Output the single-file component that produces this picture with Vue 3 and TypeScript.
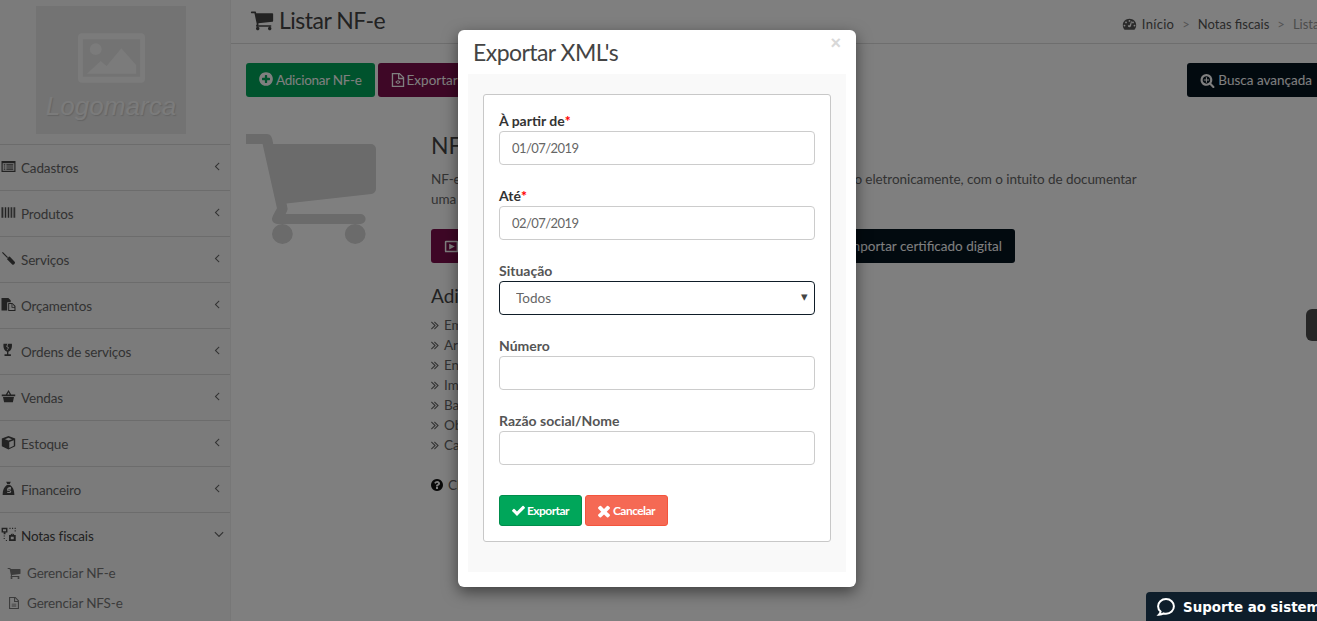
<template>
  <div class="page">
    <aside class="sidebar">
      <div class="logo">
        <svg class="logo-pic" viewBox="0 0 68 50">
          <path fill-rule="evenodd" d="M4 0h60a4 4 0 0 1 4 4v42a4 4 0 0 1-4 4H4a4 4 0 0 1-4-4V4a4 4 0 0 1 4-4zm1 6v38h58V6z" />
          <circle cx="18" cy="16" r="6" />
          <path d="M9 41l14-13 6 5 15-18 15 17v9z" />
        </svg>
        <span>Logomarca</span>
      </div>
      <ul class="menu">
        <li v-for="item in menu" :key="item.label" class="menu-item">
          <svg class="menu-icon" viewBox="0 0 1792 1792"><path fill-rule="evenodd" :d="icons[item.icon]" /></svg>
          <span class="menu-label" :class="{ open: item.open }">{{ item.label }}</span>
          <svg class="menu-arrow" :class="{ down: item.open }" viewBox="0 0 1792 1792">
            <path :d="item.open ? icons.angleDown : icons.angleLeft" />
          </svg>
        </li>
      </ul>
      <ul class="submenu">
        <li v-for="sub in submenu" :key="sub.label">
          <svg viewBox="0 0 1792 1792"><path fill-rule="evenodd" :d="icons[sub.icon]" /></svg>
          {{ sub.label }}
        </li>
      </ul>
    </aside>

    <main class="main">
      <header class="top">
        <h1><svg viewBox="0 0 1792 1792"><path :d="icons.cart" /></svg>Listar NF-e</h1>
        <nav class="crumbs">
          <svg viewBox="0 0 1792 1792"><path fill-rule="evenodd" :d="icons.gauge" /></svg>
          <a>Início</a><i>&gt;</i><a>Notas fiscais</a><i>&gt;</i><a class="muted">Listar NF-e</a>
        </nav>
      </header>

      <div class="toolbar">
        <button class="btn green"><svg class="ic-plus" viewBox="0 0 1792 1792"><path :d="icons.plus" /></svg>Adicionar NF-e</button>
        <button class="btn purple"><svg class="ic-file" viewBox="0 0 1792 1792"><path fill-rule="evenodd" :d="icons.fileCode" /></svg>Exportar XML's</button>
        <button class="btn dark push"><svg viewBox="0 0 1792 1792"><path :d="icons.search" /></svg>Busca avançada</button>
      </div>

      <section class="empty">
        <svg class="big-cart" viewBox="128 256 1600 1408" preserveAspectRatio="none"><path :d="icons.cart" /></svg>
        <div class="info">
          <h2>NF-e</h2>
          <p>NF-e é um documento de existência apenas digital, emitido e armazenado eletronicamente, com o intuito de documentar uma operação de circulação de mercadorias.</p>
          <div class="info-actions">
            <button class="btn purple"><svg viewBox="0 0 1792 1792"><path fill-rule="evenodd" :d="icons.play" /></svg>Assistir ao vídeo tutorial</button>
            <button class="btn dark"><svg viewBox="0 0 1792 1792"><path fill-rule="evenodd" :d="icons.fileCode" /></svg>Importar certificado digital</button>
          </div>
          <h3>Adicione suas notas</h3>
          <ul class="steps">
            <li v-for="step in steps" :key="step">
              <svg viewBox="0 0 1792 1792"><path :d="icons.double" /></svg>{{ step }}
            </li>
          </ul>
          <p class="help"><svg viewBox="0 0 1792 1792"><path :d="icons.question" /></svg>Clique aqui para saber mais</p>
        </div>
      </section>
    </main>

    <div class="side-tab"></div>

    <div class="backdrop"></div>

    <div class="modal">
      <span class="close">×</span>
      <h4>Exportar XML's</h4>
      <div class="modal-body">
        <form class="card" @submit.prevent>
          <div v-for="f in fields" :key="f.label" class="field">
            <label :class="{ strong: f.required }">{{ f.label }}<b v-if="f.required">*</b></label>
            <div v-if="f.select" class="select-wrap">
              <select><option>Todos</option></select>
              <span class="caret">▾</span>
            </div>
            <input v-else type="text" :value="f.value" />
          </div>
          <div class="actions">
            <button class="btn small green-on"><svg viewBox="0 0 1792 1792"><path :d="icons.check" /></svg>Exportar</button>
            <button class="btn small red-on"><svg class="ic-times" viewBox="0 0 1792 1792"><path :d="icons.times" /></svg>Cancelar</button>
          </div>
        </form>
      </div>
    </div>

    <div class="chat">
      <svg viewBox="0 0 24 24"><path d="M12 2.500c-5.500 0-9.500 3.800-9.500 8.700 0 2.600 1.100 4.700 3 6.300-.2 1.400-.9 2.600-2 3.700 2.400 0 4.300-.6 5.700-1.500 1 .2 1.900.3 2.800.3 5.500 0 9.500-3.900 9.500-8.800S17.500 2.500 12 2.500z" /></svg>
      <span>Suporte ao sistema</span>
    </div>
  </div>
</template>

<script setup lang="ts">
const icons: Record<string, string> = {
  cart: 'M704 1536q0 52-38 90t-90 38-90-38-38-90 38-90 90-38 90 38 38 90zm896 0q0 52-38 90t-90 38-90-38-38-90 38-90 90-38 90 38 38 90zm128-1088v512q0 24-16.500 42.500t-40.500 21.500l-1044 122q13 60 13 70 0 16-24 64h920q26 0 45 19t19 45-19 45-45 19h-1024q-26 0-45-19t-19-45q0-11 8-31.500t16-36 21.500-40 15.500-29.500l-177-823h-204q-26 0-45-19t-19-45 19-45 45-19h256q16 0 28.500 6.500t19.500 15.500 13 24.500 8 26 5.500 29.500 4.500 26h1201q26 0 45 19t19 45z',
  check: 'M1671 566q0 40-28 68l-724 724-136 136q-28 28-68 28t-68-28l-136-136-362-362q-28-28-28-68t28-68l136-136q28-28 68-28t68 28l294 295 656-657q28-28 68-28t68 28l136 136q28 28 28 68z',
  times: 'M1490 1322q0 40-28 68l-136 136q-28 28-68 28t-68-28l-294-294-294 294q-28 28-68 28t-68-28l-136-136q-28-28-28-68t28-68l294-294-294-294q-28-28-28-68t28-68l136-136q28-28 68-28t68 28l294 294 294-294q28-28 68-28t68 28l136 136q28 28 28 68t-28 68l-294 294 294 294q28 28 28 68z',
  plus: 'M1344 960v-128q0-26-19-45t-45-19h-256v-256q0-26-19-45t-45-19h-128q-26 0-45 19t-19 45v256h-256q-26 0-45 19t-19 45v128q0 26 19 45t45 19h256v256q0 26 19 45t45 19h128q26 0 45-19t19-45v-256h256q26 0 45-19t19-45zm320-64q0 209-103 385.500t-279.500 279.500-385.500 103-385.500-103-279.500-279.500-103-385.500 103-385.500 279.500-279.500 385.500-103 385.500 103 279.500 279.500 103 385.500z',
  question: 'M1024 1376v-192q0-14-9-23t-23-9h-192q-14 0-23 9t-9 23v192q0 14 9 23t23 9h192q14 0 23-9t9-23zm256-672q0-88-55.500-163t-138.500-116-170-41q-243 0-371 213-15 24 8 42l132 100q7 6 19 6 16 0 25-12 53-68 86-92 34-24 86-24 48 0 85.500 26t37.500 59q0 38-20 61t-68 45q-63 28-115.500 86.500t-52.500 125.500v36q0 14 9 23t23 9h192q14 0 23-9t9-23q0-19 21.500-49.500t54.500-49.500q32-18 49-28.500t46-35 44.500-48 28-60.500 12.500-81zm384 192q0 209-103 385.500t-279.500 279.500-385.500 103-385.500-103-279.500-279.500-103-385.500 103-385.500 279.500-279.500 385.500-103 385.500 103 279.500 279.500 103 385.500z',
  angleLeft: 'M1203 544q0 13-10 23l-393 393 393 393q10 10 10 23t-10 23l-50 50q-10 10-23 10t-23-10l-466-466q-10-10-10-23t10-23l466-466q10-10 23-10t23 10l50 50q10 10 10 23z',
  angleDown: 'M1395 736q0 13-10 23l-466 466q-10 10-23 10t-23-10l-466-466q-10-10-10-23t10-23l50-50q10-10 23-10t23 10l393 393 393-393q10-10 23-10t23 10l50 50q10 10 10 23z',
  double: 'M979 960q0 13-10 23l-466 466q-10 10-23 10t-23-10l-50-50q-10-10-10-23t10-23l393-393-393-393q-10-10-10-23t10-23l50-50q10-10 23-10t23 10l466 466q10 10 10 23zm384 0q0 13-10 23l-466 466q-10 10-23 10t-23-10l-50-50q-10-10-10-23t10-23l393-393-393-393q-10-10-10-23t10-23l50-50q10-10 23-10t23 10l466 466q10 10 10 23z',
  search: 'M1088 800v64q0 13-9.500 22.500t-22.500 9.500h-224v224q0 13-9.500 22.500t-22.500 9.500h-64q-13 0-22.500-9.500t-9.500-22.500v-224h-224q-13 0-22.500-9.500t-9.500-22.500v-64q0-13 9.500-22.500t22.500-9.500h224v-224q0-13 9.500-22.500t22.500-9.500h64q13 0 22.500 9.500t9.500 22.500v224h224q13 0 22.500 9.500t9.500 22.500zm128 32q0-185-131.500-316.500t-316.500-131.500-316.500 131.500-131.500 316.500 131.500 316.500 316.500 131.500 316.500-131.500 131.500-316.500zm512 832q0 53-37.500 90.500t-90.500 37.500q-54 0-90-38l-343-342q-179 124-399 124-143 0-273.500-55.500t-225-150-150-225-55.500-273.500 55.500-273.500 150-225 225-150 273.500-55.500 273.500 55.500 225 150 150 225 55.500 273.500q0 220-124 399l343 343q37 37 37 90z',
  // desenhados à mão, mesma grade de 1792
  listAlt: 'M60 240h1672v1300H60zM200 520v880h1392V520zM320 640h200v130H320zm320 0h830v130H640zM320 890h200v130H320zm320 0h830v130H640zM320 1140h200v130H320zm320 0h830v130H640z',
  barcode: 'M60 260h170v1270H60zm260 0h60v1270h-60zm150 0h130v1270H470zm220 0h60v1270h-60zm150 0h130v1270H840zm220 0h60v1270h-60zm150 0h130v1270h-130zm220 0h60v1270h-60zm140 0h130v1270h-130z',
  tool: 'M120 220L220 120 900 800 800 900zM800 760L1040 660 1660 1300Q1700 1420 1600 1560 1480 1680 1340 1600L720 1000z',
  files: 'M60 120h820l280 280v220H740v1000H60zM860 720h500l370 370v590H860zm500 100v360h270zM980 840v720h630v-280h-350V840z',
  trophy: 'M300 100h480l-160 330 220 160-160 260 60 30 210-310-200-170 120-300h430c60 500-120 850-420 950v290h300v200H420v-200h300v-290C420 950 240 600 300 100z',
  basket: 'M900 120l320 540h480v200H90V660h480zm0 260L760 660h280zM240 960h1310l-130 620H370z',
  cube: 'M896 120l800 300v920l-800 380-800-380V420zm0 220L470 500l426 160 426-160zM990 830v710l540-270V630z',
  bag: 'M620 100h550l-130 300H750zM700 480h390c330 230 500 620 500 1070v130H200v-130c0-450 170-840 500-1070zm20 620c0 130 360 70 360 160s-240 70-350 20v130c170 60 490 60 490-150 0-170-370-90-370-180 0-80 220-60 340-20V740c-170-40-470-30-470 360z',
  nodes: 'M70 100h700v560H540v210H320V660H70zm170 160v240h360V260zM1010 100h130v130h-130zm310 0h130v130h-130zm310 0h130v130h-130zm0 300h130v130h-130zM320 1010h130v130H320zm0 300h130v130H320zm260 240h130v130H580zm380-580h190c0-230 420-230 420 0h190v710H960zm340 0h110c0-80-110-80-110 0zm-130 180v320h350v-320z',
  fileText: 'M260 120h830l440 440v1110H260zM1040 250v380h360zM400 260v1270h990V770H900V260zm200 730h590v110H600zm0 240h590v110H600z',
  fileCode: 'M200 100h890l500 500v1090H200zM1040 240v410h410zM350 250v1290h1090V800H900V250zm230 880l260-220 80 90-160 130 160 130-80 90zm630 0l-260 220-80-90 160-130-160-130 80-90z',
  play: 'M240 200h1310a140 140 0 0 1 140 140v1110a140 140 0 0 1-140 140H240a140 140 0 0 1-140-140V340a140 140 0 0 1 140-140zm40 180v1030h1230V380zM620 560l680 340-680 340z',
  gauge: 'M896 220c440 0 800 330 800 760 0 210-80 390-210 540H306C176 1370 96 1190 96 980c0-430 360-760 800-760zM896 360a110 110 0 1 0 0 220 110 110 0 0 0 0-220zM480 540a110 110 0 1 0 0 220 110 110 0 0 0 0-220zm832 0a110 110 0 1 0 0 220 110 110 0 0 0 0-220zM300 920a110 110 0 1 0 0 220 110 110 0 0 0 0-220zm1190 0a110 110 0 1 0 0 220 110 110 0 0 0 0-220zM700 1020a190 190 0 1 0 380 30l110-500-90-30-180 480c-110-10-210 0-220 20z',
}

interface MenuItem {
  label: string
  icon: string
  open?: boolean
}

const menu: MenuItem[] = [
  { label: 'Cadastros', icon: 'listAlt' },
  { label: 'Produtos', icon: 'barcode' },
  { label: 'Serviços', icon: 'tool' },
  { label: 'Orçamentos', icon: 'files' },
  { label: 'Ordens de serviços', icon: 'trophy' },
  { label: 'Vendas', icon: 'basket' },
  { label: 'Estoque', icon: 'cube' },
  { label: 'Financeiro', icon: 'bag' },
  { label: 'Notas fiscais', icon: 'nodes', open: true },
]

const submenu = [
  { label: 'Gerenciar NF-e', icon: 'cart' },
  { label: 'Gerenciar NFS-e', icon: 'fileText' },
]

const steps = [
  'Emita notas fiscais',
  'Armazene os arquivos XML',
  'Envie por e-mail ao cliente',
  'Imprima o DANFE',
  'Baixe os documentos',
  'Obtenha relatórios',
  'Cancele notas emitidas',
]

const fields = [
  { label: 'À partir de', value: '01/07/2019', required: true },
  { label: 'Até', value: '02/07/2019', required: true },
  { label: 'Situação', select: true },
  { label: 'Número', value: '' },
  { label: 'Razão social/Nome', value: '' },
]
</script>

<style>
html,
body {
  margin: 0;
  overflow: hidden;
}
</style>

<style scoped>
.page {
  position: relative;
  display: flex;
  width: 1317px;
  height: 621px;
  overflow: hidden;
  background: #fff;
  color: #666;
  font-family: Lato, "Open Sans", sans-serif;
  font-size: 14px;
}

ul {
  list-style: none;
  margin: 0;
  padding: 0;
}

svg {
  fill: currentColor;
  flex: none;
}

/* sidebar */
.sidebar {
  width: 230px;
  flex: none;
  background: #f7f7f7;
  border-right: 1px solid #eee;
}

.logo {
  width: 150px;
  height: 128px;
  margin: 6px 0 10px 36px;
  background: #e6e6e6;
  color: #f6f6f6;
  display: flex;
  flex-direction: column;
  align-items: center;
  overflow: hidden;
}

.logo-pic {
  width: 67px;
  height: 50px;
  margin-top: 27px;
}

.logo span {
  margin-top: 8px;
  font: italic 26px "Liberation Sans", sans-serif;
  letter-spacing: 0.05px;
  text-shadow: 1px 1px 1px #c8c8c8;
}

.menu-item {
  height: 45px;
  border-top: 1px solid #d8d8d8;
  display: flex;
  align-items: center;
  padding-left: 1px;
  font-size: 13.500px;
  letter-spacing: -0.15px;
}

.menu-icon {
  width: 15px;
  height: 15px;
  margin: -2px 5px 0 0;
  color: #444;
}

.menu-label.open {
  color: #444;
}

.menu-arrow {
  width: 14px;
  height: 14px;
  margin: -4px 6px 0 auto;
}

.menu-arrow.down {
  width: 16px;
  height: 16px;
  margin-right: 3px;
}

.submenu li {
  height: 30px;
  display: flex;
  align-items: center;
  gap: 6px;
  padding-left: 7px;
  font-size: 13.500px;
  letter-spacing: -0.15px;
  color: #777;
}

.submenu svg {
  width: 14px;
  height: 14px;
}

/* conteúdo */
.main {
  flex: 1;
  min-width: 0;
}

.top {
  height: 43px;
  border-bottom: 1px solid #ddd;
  display: flex;
  align-items: center;
  padding-left: 19px;
  white-space: nowrap;
}

h1 {
  margin: -4px 0 0;
  font-size: 23px;
  font-weight: 400;
  letter-spacing: -0.5px;
  color: #444;
  display: flex;
  align-items: center;
  gap: 5px;
}

h1 svg {
  width: 24px;
  height: 24px;
}

.crumbs {
  margin-left: auto;
  margin-right: -39px;
  display: flex;
  align-items: center;
  font-size: 13px;
  color: #555;
  padding-top: 5px;
}

.crumbs svg {
  width: 15px;
  height: 15px;
  margin-right: 5px;
}

.crumbs a:first-of-type {
  letter-spacing: 0.3px;
}

.crumbs i {
  font-style: normal;
  color: #aaa;
  margin: 0 8px;
}

.crumbs .muted {
  color: #999;
}

.toolbar {
  display: flex;
  gap: 3px;
  padding: 19px 0 0 15px;
  white-space: nowrap;
}

.btn {
  height: 34px;
  border: 1px solid transparent;
  border-radius: 3px;
  padding: 0 12px;
  font: inherit;
  font-size: 13.500px;
  color: #fff;
  display: inline-flex;
  align-items: center;
  gap: 3px;
  white-space: nowrap;
}

.btn svg {
  width: 15px;
  height: 15px;
}

.btn svg.ic-plus {
  width: 16px;
  height: 16px;
  margin: -3px -1px 0;
}

.btn svg.ic-file {
  width: 16px;
  height: 16px;
  margin: 0 -2px 0 -1px;
}

.green {
  background: #00a65a;
  letter-spacing: -0.27px;
}

.purple {
  background: #7d0e4c;
  padding-right: 20px;
}

.dark {
  background: #05141f;
}

.push {
  margin-left: auto;
  margin-right: -8px;
  gap: 3px;
}

.empty {
  display: flex;
  padding: 37px 0 0 15px;
}

.big-cart {
  width: 130px;
  height: 110px;
  color: #d6d6d6;
}

.info {
  margin-left: 55px;
  width: 720px;
}

.info h2 {
  margin: -3px 0 0;
  font-size: 23px;
  font-weight: 400;
  color: #444;
}

.info p {
  margin: 10px 0 0;
  font-size: 13.500px;
  line-height: 20px;
  letter-spacing: -0.06px;
}

.info-actions {
  display: flex;
  justify-content: space-between;
  width: 584px;
  margin-top: 20px;
}

.info-actions .btn {
  gap: 6px;
}

.info h3 {
  margin: 21px 0 8px;
  font-size: 19px;
  font-weight: 400;
  color: #444;
}

.steps li {
  height: 20px;
  display: flex;
  align-items: center;
  gap: 2px;
  font-size: 13.500px;
}

.steps svg {
  width: 14px;
  height: 14px;
  margin-left: -3px;
}

.info .help {
  margin-top: 20px;
  display: flex;
  align-items: center;
  gap: 4px;
}

.help svg {
  width: 14px;
  height: 14px;
  margin-left: -1px;
  color: #111;
}

.side-tab {
  position: absolute;
  left: 1306px;
  top: 309px;
  width: 24px;
  height: 32px;
  border-radius: 6px;
  background: #4c4c4c;
}

/* modal */
.backdrop {
  position: absolute;
  inset: 0;
  background: rgba(0, 0, 0, 0.5);
}

.modal {
  position: absolute;
  left: 458px;
  top: 30px;
  width: 398px;
  height: 557px;
  box-sizing: border-box;
  background: #fff;
  border-radius: 6px;
  box-shadow: 0 5px 15px rgba(0, 0, 0, 0.5);
  padding: 0 10px;
}

.close {
  position: absolute;
  right: 15px;
  top: 3px;
  font-size: 18px;
  font-weight: 700;
  color: #d8d8d8;
  font-family: "Liberation Sans", sans-serif;
}

h4 {
  margin: 0;
  height: 44px;
  padding: 7px 0 0 5px;
  box-sizing: border-box;
  font-size: 23px;
  font-weight: 400;
  letter-spacing: -0.55px;
  line-height: 30px;
  color: #444;
}

.modal-body {
  height: 498px;
  box-sizing: border-box;
  background: #f9f9f9;
  padding: 20px 15px 30px;
}

.card {
  height: 448px;
  box-sizing: border-box;
  background: #fff;
  border: 1px solid #c8c8c8;
  border-radius: 3px;
  padding: 16px 15px 0;
}

.field {
  height: 75px;
}

label {
  display: block;
  height: 20px;
  font-size: 14px;
  font-weight: 700;
  color: #555;
  line-height: 20px;
}

label.strong {
  color: #333;
}

label b {
  color: #f00;
}

input,
select {
  display: block;
  width: 100%;
  height: 34px;
  box-sizing: border-box;
  background: #fff;
  border: 1px solid #ccc;
  border-radius: 4px;
  padding: 0 12px;
  font: inherit;
  font-size: 13px;
  color: #666;
  outline: none;
}

input {
  letter-spacing: -0.55px;
}

.select-wrap {
  position: relative;
}

select {
  appearance: none;
  border-color: #0f1d28;
  padding-left: 16px;
  font-size: 13.500px;
}

.caret {
  position: absolute;
  right: 7px;
  top: 7px;
  font-size: 13px;
  color: #444;
  pointer-events: none;
}

.actions {
  display: flex;
  gap: 3px;
  margin-top: 9px;
}

.btn.small {
  height: 31px;
  padding: 0 12px;
  font-size: 12px;
  font-weight: 700;
  letter-spacing: -0.55px;
  gap: 1px;
}

.btn.small svg {
  width: 15px;
  height: 15px;
  margin-left: -1px;
}

.btn.small svg.ic-times {
  width: 18px;
  height: 18px;
  margin: 0 -1px 0 -3px;
}

.green-on {
  background: #00a65a;
  border-color: #008d4c;
}

.red-on {
  background: #f56954;
  border-color: #f4543c;
}

.chat {
  position: absolute;
  left: 1146px;
  top: 592px;
  width: 200px;
  height: 29px;
  background: #0e1e2b;
  border-radius: 4px 0 0 0;
  display: flex;
  align-items: center;
  gap: 7px;
  padding: 1px 0 0 10px;
  box-sizing: border-box;
  color: #fff;
  font: 700 13.400px "DejaVu Sans", sans-serif;
  white-space: nowrap;
}

.chat svg {
  width: 20px;
  height: 20px;
  fill: none;
  stroke: #fff;
  stroke-width: 2.400;
}
</style>
